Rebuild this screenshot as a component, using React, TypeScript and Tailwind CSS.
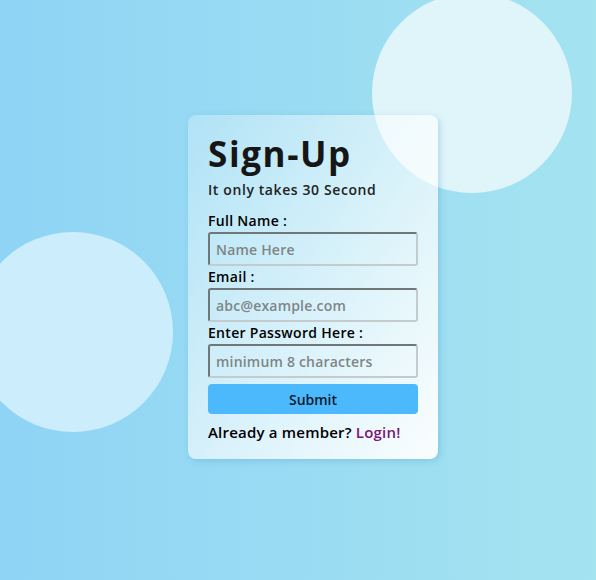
export default function App() {
  const font = { fontFamily: '"Open Sans", "Noto Sans", sans-serif' };
  const inputCls =
    "mt-[1px] h-[34px] w-[210px] rounded-[3px] border-2 border-t-[#6f7779] border-l-[#6f7779] border-b-[#c3cbcd] border-r-[#c3cbcd] bg-transparent px-[6px] text-[14px] font-semibold tracking-[0.2px] placeholder:text-[#808587] outline-none";
  return (
    <div
      className="relative h-[580px] w-full overflow-hidden bg-gradient-to-r from-[#8fd4f5] to-[#a4e3f0] flex items-center justify-center pl-[30px]"
      style={font}
    >
      {/* decorative circles */}
      <div className="absolute left-[372px] top-[-7px] h-[200px] w-[200px] rounded-full bg-[#e0f5fa]" />
      <div className="absolute left-[-27px] top-[232px] h-[200px] w-[200px] rounded-full bg-[#ccedfc]" />

      <div className="relative w-[250px] h-[344px] -mt-[6px] rounded-lg bg-gradient-to-br from-white/25 to-white/95 shadow-[2px_2px_6px_rgba(70,150,200,0.3)] px-5 pt-[17px]">
        <h1 className="text-[35px] leading-[44px] font-bold text-[#161616] tracking-[1.6px]">Sign-Up</h1>
        <p className="mt-[4px] text-[14px] leading-5 font-semibold text-[#222] tracking-[0.6px]">It only takes 30 Second</p>

        <form className="mt-[11px] flex flex-col" onSubmit={(e) => e.preventDefault()}>
          <label className="text-[14px] leading-5 font-semibold text-black tracking-[0.3px]">Full Name :</label>
          <input className={inputCls} placeholder="Name Here" />
          <label className="mt-[1px] text-[14px] leading-5 font-semibold text-black tracking-[0.3px]">Email :</label>
          <input className={inputCls} placeholder="abc@example.com" />
          <label className="mt-[1px] text-[14px] leading-5 font-semibold text-black tracking-[0.3px]">Enter Password Here :</label>
          <input type="password" className={inputCls} placeholder="minimum 8 characters" />
          <button
            type="submit"
            className="mt-[6px] h-[30px] w-[210px] rounded-[4px] bg-[#4bb9fb] text-[14px] font-semibold text-[#0d1a2e]"
          >
            Submit
          </button>
          <p className="mt-[8px] text-[15px] leading-5 font-semibold text-black tracking-[0.2px]">
            Already a member? <a href="#" className="text-[#7a1677]">Login!</a>
          </p>
        </form>
      </div>
    </div>
  );
}
